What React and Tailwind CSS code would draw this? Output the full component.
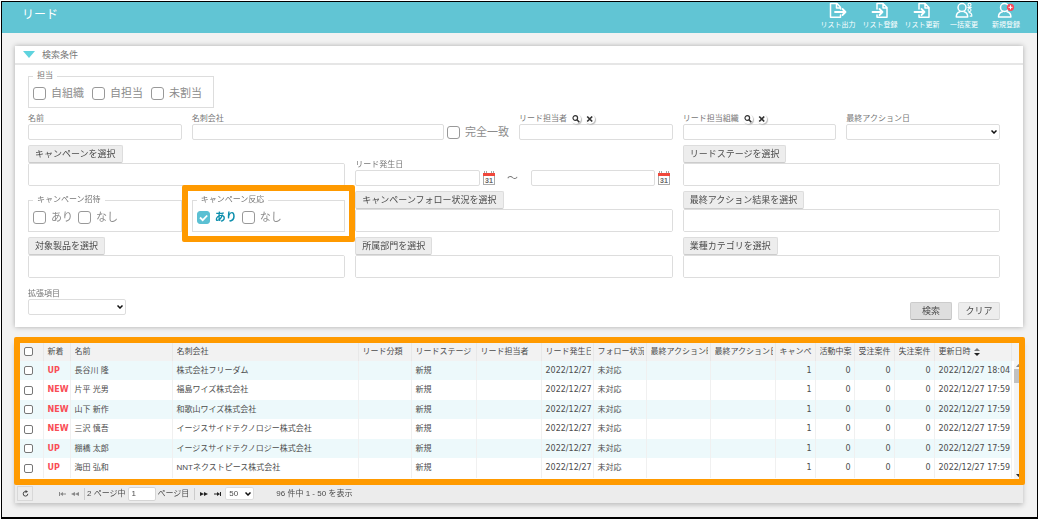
import { useState } from 'react'
import clsx from 'clsx'

const columns = [
  { key: 'name',     label: '名前',             width: 'w-[102px]' },
  { key: 'company',  label: '名刺会社',         width: '' },
  { key: 'category', label: 'リード分類',       width: 'w-[53px]' },
  { key: 'stage',    label: 'リードステージ',   width: 'w-[65px]' },
  { key: 'owner',    label: 'リード担当者',     width: 'w-[65px]' },
  { key: 'date',     label: 'リード発生日',     width: 'w-[52px]' },
  { key: 'follow',   label: 'フォロー状況',     width: 'w-[53px]' },
  { key: 'action',   label: '最終アクション時', width: 'w-[64px]' },
  { key: 'result',   label: '最終アクション日', width: 'w-[65px]' },
  { key: 'campaign', label: 'キャンペ',         width: 'w-[40px]', number: true },
  { key: 'active',   label: '活動中案',         width: 'w-[39px]', number: true },
  { key: 'won',      label: '受注案件',         width: 'w-[40px]', number: true },
  { key: 'lost',     label: '失注案件',         width: 'w-[40px]', number: true },
  { key: 'updated',  label: '更新日時',         width: 'w-[77px]', sorted: true },
]

const base = { stage: '新規', date: '2022/12/27', follow: '未対応', campaign: 1, active: 0, won: 0, lost: 0 }

const leads = [
  { ...base, mark: 'UP',  name: '長谷川 隆', company: '株式会社フリーダム', updated: '2022/12/27 18:04' },
  { ...base, mark: 'NEW', name: '片平 光男', company: '福島ワイズ株式会社', updated: '2022/12/27 17:59' },
  { ...base, mark: 'NEW', name: '山下 新作', company: '和歌山ワイズ株式会社', updated: '2022/12/27 17:59' },
  { ...base, mark: 'NEW', name: '三沢 慎吾', company: 'イージスサイドテクノロジー株式会社', updated: '2022/12/27 17:59' },
  { ...base, mark: 'UP',  name: '棚橋 太郎', company: 'イージスサイドテクノロジー株式会社', updated: '2022/12/27 17:59' },
  { ...base, mark: 'UP',  name: '海田 弘和', company: 'NNTネクストピース株式会社', updated: '2022/12/27 17:59' },
]

// ── Icons ──────────────────────────────────────────────────────────────────
function HeaderIcon({ children }) {
  return (
    <svg width="18" height="17" viewBox="0 0 18 17" fill="none" stroke="white" strokeWidth="1.5" strokeLinejoin="round" strokeLinecap="round" aria-hidden="true">
      {children}
    </svg>
  )
}

function ExportIcon() {
  return (
    <HeaderIcon>
      <path d="M11.5 7V5.200L8 1.500H1.500v13.800h10V13M7.500 1.500V6h4" />
      <path d="M6 10h10.500M13.500 7l3 3-3 3" strokeWidth="1.800" />
    </HeaderIcon>
  )
}

function ImportIcon() {
  return (
    <HeaderIcon>
      <path d="M6 7V1.500h6l4 4v9.800H6V13M12 1.500V6h4" />
      <path d="M1.500 10h10M8.500 7l3 3-3 3" strokeWidth="1.800" />
    </HeaderIcon>
  )
}

function PeopleIcon() {
  return (
    <HeaderIcon>
      <circle cx="7" cy="5.500" r="4" />
      <path d="M5 9.700C2.600 10.300 1.300 12 1.300 15h11.400c0-3-1.300-4.700-3.700-5.300" />
      <g strokeWidth="1.100">
        <circle cx="14.500" cy="2.800" r="1.500" />
        <circle cx="14.500" cy="8" r="1.500" />
        <path d="M12.800 5.400h3.400M14 10.600c1.900 0 2.900 1.200 2.900 3.500h-1.800" />
      </g>
    </HeaderIcon>
  )
}

function PersonAddIcon() {
  return (
    <HeaderIcon>
      <circle cx="7.500" cy="5.500" r="4" />
      <path d="M5.500 9.700C2.900 10.200 1.500 12 1.500 15h12.400c0-3-1.300-4.700-3.900-5.300" />
      <circle cx="13.500" cy="5.300" r="3.600" fill="#f8485a" stroke="none" />
      <path d="M13.500 3.700v3.200M11.900 5.300h3.200" strokeWidth="1" />
    </HeaderIcon>
  )
}

function CalendarIcon() {
  return (
    <svg width="12" height="14" viewBox="0 0 12 14" aria-hidden="true">
      <rect x="0.500" y="2.500" width="11" height="11" fill="white" stroke="#aaa" />
      <path d="M0 2h12v3H0z" fill="#f0483c" />
      <path d="M1 1h3M8 1h3" stroke="#888" strokeWidth="1.500" strokeDasharray="1 1" />
      <text x="6" y="12" textAnchor="middle" fontSize="7" fontWeight="bold" fill="#666">31</text>
    </svg>
  )
}

function PagerIcon({ d, dim }) {
  return (
    <svg width="8" height="6" viewBox="0 0 8 6" fill={dim ? '#888' : '#222'} aria-hidden="true">
      <path d={d} />
    </svg>
  )
}

const toolbar = [
  { label: 'リスト出力', Icon: ExportIcon },
  { label: 'リスト登録', Icon: ImportIcon },
  { label: 'リスト更新', Icon: ImportIcon },
  { label: '一括変更',   Icon: PeopleIcon },
  { label: '新規登録',   Icon: PersonAddIcon },
]

// ── Form parts ─────────────────────────────────────────────────────────────
const boxClass = 'block w-full border border-[#ddd] rounded-[2px] bg-white'

function Select({ className, children, ...props }) {
  return (
    <div className={clsx('relative', className)}>
      <select {...props} className={clsx(boxClass, 'appearance-none h-full pl-[3px] text-[8px] leading-[10px]')}>
        {children}
      </select>
      <svg width="6" height="4" viewBox="0 0 6 4" fill="none" stroke="#111" strokeWidth="1.500" className="absolute right-[3px] inset-y-0 my-auto pointer-events-none" aria-hidden="true">
        <path d="M.5.500L3 3 5.500.500" />
      </svg>
    </div>
  )
}

function Check({ label, defaultChecked = false }) {
  const [checked, setChecked] = useState(defaultChecked)
  return (
    <label className="relative flex items-center gap-[5px] shrink-0 text-[11px] leading-[14px]">
      <input
        type="checkbox"
        checked={checked}
        onChange={(e) => setChecked(e.target.checked)}
        className="appearance-none size-[13px] rounded-[3px] border border-[#999] bg-white checked:bg-[#5bc0d3] checked:border-[#5bc0d3]"
      />
      {checked && (
        <svg className="absolute left-0 inset-y-0 my-auto size-[13px] pointer-events-none" viewBox="0 0 13 13" fill="none" stroke="white" strokeWidth="1.800" aria-hidden="true">
          <path d="M3 6.500l2.700 2.700L10.200 4.500" />
        </svg>
      )}
      <span className={checked ? 'font-bold text-[#0d8fad]' : 'text-[#8c8c8c]'}>{label}</span>
    </label>
  )
}

function CheckGroup({ legend, className, children }) {
  return (
    <fieldset className={clsx('min-w-0 h-[37px] border border-[#ddd] pl-1', className)}>
      <legend className="px-1 text-[8px] leading-[10px]">{legend}</legend>
      <div className="flex items-center h-[24px]">{children}</div>
    </fieldset>
  )
}

function Field({ id, label, lookup, className, children }) {
  return (
    <div className={className}>
      <div className="flex items-center h-[11px] text-[8px] leading-[10px] whitespace-nowrap">
        <label htmlFor={id}>{label}</label>
        {lookup && (
          <span className="flex gap-1 ml-1">
            <button type="button" aria-label={`${label}を検索`} className="size-[10px] rounded-full bg-white shadow-[1px_1px_1px_#bbb]">
              <svg width="10" height="10" viewBox="0 0 10 10" fill="none" stroke="#333" strokeWidth="1.200" aria-hidden="true">
                <circle cx="4.300" cy="4" r="2.300" />
                <path d="M6 5.700l2.300 2.500" strokeWidth="1.600" />
              </svg>
            </button>
            <button type="button" aria-label={`${label}を消去`} className="size-[10px] rounded-full bg-white shadow-[1px_1px_1px_#bbb]">
              <svg width="10" height="10" viewBox="0 0 10 10" fill="none" stroke="#333" strokeWidth="1.700" aria-hidden="true">
                <path d="M2.200 2.500l5 5M7.200 2.500l-5 5" />
              </svg>
            </button>
          </span>
        )}
      </div>
      {children}
    </div>
  )
}

function Picker({ label }) {
  return (
    <div className="col-span-2">
      <button type="button" className="block h-[18px] px-[6px] border border-[#ddd] border-b-[#ccc] rounded-[2px] bg-[#ededed] text-[9px] leading-[14px] text-[#4c4c4c] whitespace-nowrap">
        {label}
      </button>
      <textarea aria-label={label} className={clsx(boxClass, 'h-[23px] resize-none')} />
    </div>
  )
}

function DateInput({ id, label }) {
  return (
    <div className="flex-1 flex items-center gap-[3px] min-w-0">
      <input id={id} type="text" aria-label={label} className={clsx(boxClass, 'h-4 min-w-0')} />
      <button type="button" aria-label="カレンダー" className="shrink-0"><CalendarIcon /></button>
    </div>
  )
}

function SearchPanel() {
  return (
    <section className="bg-white text-[#777] shadow-[0_0_5px_#aaa]">
      <h2 className="flex items-center h-[19px] pl-2 gap-[7px] border-b-2 border-[#e6e6e6] text-[9px] leading-[14px]">
        <svg width="12" height="7" viewBox="0 0 12 7" fill="#5fd3de" aria-hidden="true"><path d="M0 0h12L6 7z" /></svg>
        検索条件
      </h2>
      <form className="pt-[6px] pb-[7px] pl-[13px] pr-[23px]" onSubmit={(e) => e.preventDefault()}>
        <CheckGroup legend="担当" className="w-[186px]">
          <div className="flex gap-2">
            <Check label="自組織" />
            <Check label="自担当" />
            <Check label="未割当" />
          </div>
        </CheckGroup>

        <div className="grid grid-cols-6 gap-x-[10px] gap-y-[5px] mt-[5px]">
          <Field id="name" label="名前">
            <input id="name" type="text" className={clsx(boxClass, 'h-4')} />
          </Field>
          <Field id="company" label="名刺会社" className="col-span-2">
            <div className="flex items-center gap-[3px] h-4">
              <input id="company" type="text" className={clsx(boxClass, 'h-4 min-w-0')} />
              <Check label="完全一致" />
            </div>
          </Field>
          <Field id="owner" label="リード担当者" lookup>
            <input id="owner" type="text" className={clsx(boxClass, 'h-4')} />
          </Field>
          <Field id="team" label="リード担当組織" lookup>
            <input id="team" type="text" className={clsx(boxClass, 'h-4')} />
          </Field>
          <Field id="action" label="最終アクション日">
            <Select id="action" className="h-4" />
          </Field>

          <Picker label="キャンペーンを選択" />
          <Field id="from" label="リード発生日" className="col-span-2 self-end">
            <div className="flex items-center h-4 pr-[3px]">
              <DateInput id="from" label="リード発生日 開始" />
              <span className="w-9 text-center text-[11px] leading-[14px]">～</span>
              <DateInput id="to" label="リード発生日 終了" />
            </div>
          </Field>
          <Picker label="リードステージを選択" />

          <CheckGroup legend="キャンペーン招待" className="self-end">
            <div className="flex gap-[5px]">
              <Check label="あり" />
              <Check label="なし" />
            </div>
          </CheckGroup>
          <div className="relative self-end">
            <CheckGroup legend="キャンペーン反応">
              <div className="flex gap-[5px]">
                <Check label="あり" defaultChecked />
                <Check label="なし" />
              </div>
            </CheckGroup>
            <div className="absolute -inset-[10px] z-10 border-6 border-[#ff9a00] rounded-[2px] pointer-events-none" />
          </div>
          <Picker label="キャンペーンフォロー状況を選択" />
          <Picker label="最終アクション結果を選択" />

          <Picker label="対象製品を選択" />
          <Picker label="所属部門を選択" />
          <Picker label="業種カテゴリを選択" />
        </div>

        <div className="flex justify-between mt-[10px]">
          <Field id="extra" label="拡張項目" className="w-[98px]">
            <Select id="extra" className="h-4" />
          </Field>
          <div className="flex gap-[6px] pt-[14px] text-[9px] leading-[14px] text-[#4c4c4c]">
            <button type="submit" className="w-[42px] h-[18px] border border-[#ccc] border-b-[#aaa] rounded-[2px] bg-[#dedede]">検索</button>
            <button type="reset" className="w-[42px] h-[18px] border border-[#ddd] border-b-[#ccc] rounded-[2px] bg-[#ededed]">クリア</button>
          </div>
        </div>
      </form>
    </section>
  )
}

// ── Result list ────────────────────────────────────────────────────────────
function RowCheck({ label }) {
  return (
    <input type="checkbox" aria-label={label} className="block appearance-none size-[9px] ml-[9px] rounded-[2px] border border-[#777] bg-white checked:bg-[#5bc0d3]" />
  )
}

function LeadTable() {
  return (
    <div className="relative bg-white pb-[2px]">
      <table className="w-full table-fixed border-collapse text-left text-[8px] leading-[12px] text-[#4c4c4c] whitespace-nowrap">
        <thead>
          <tr className="h-[19px] bg-[#f2f2f2]">
            <th className="w-[28px] p-0 border-r border-[#e8e8e8]"><RowCheck label="すべて選択" /></th>
            <th className="w-[27px] p-0 pl-1 border-r border-[#e8e8e8] font-normal">新着</th>
            {columns.map(c => (
              <th key={c.key} className={clsx('p-0 pl-1 pr-[2px] border-r border-[#e8e8e8] font-normal', c.width)}>
                <div className="flex items-center gap-[3px] overflow-hidden">
                  {c.label}
                  {c.sorted && (
                    <svg width="6" height="8" viewBox="0 0 6 8" className="shrink-0" aria-hidden="true">
                      <path d="M0 3l3-3 3 3z" fill="#777" />
                      <path d="M0 5l3 3 3-3z" fill="#222" />
                    </svg>
                  )}
                </div>
              </th>
            ))}
            <td className="w-3 p-0" />
          </tr>
        </thead>
        <tbody>
          {leads.map((lead, i) => (
            <tr key={i} className="group odd:h-[19px] even:h-[20px]">
              <td className="p-0 border-r border-[#f0f0f0] group-odd:bg-[#edf9fb]"><RowCheck label={lead.name} /></td>
              <td className="p-0 pl-1 border-r border-[#f0f0f0] group-odd:bg-[#edf9fb] font-[DejaVu_Sans] font-bold text-[#f94d55]">{lead.mark}</td>
              {columns.map(c => (
                <td
                  key={c.key}
                  className={clsx(
                    'p-0 pl-1 overflow-hidden border-r border-[#f0f0f0] group-odd:bg-[#edf9fb]',
                    c.number && 'pr-[3px] text-right',
                    (c.number || c.key === 'date' || c.key === 'updated') && 'font-[DejaVu_Sans]'
                  )}
                >
                  {lead[c.key]}
                </td>
              ))}
              <td className="p-0" />
            </tr>
          ))}
        </tbody>
      </table>

      {/* scrollbar */}
      <div className="absolute right-0 top-[19px] bottom-0 w-[9px] bg-[#f4f4f4] flex flex-col items-center">
        <svg width="9" height="8" viewBox="0 0 9 8" aria-hidden="true"><path d="M2 6l2.500-3L7 6z" fill="#888" /></svg>
        <div className="w-full h-[14px] bg-[#c1c1c1]" />
        <svg width="9" height="8" viewBox="0 0 9 8" className="mt-auto" aria-hidden="true"><path d="M2 2l2.500 3L7 2z" fill="#333" /></svg>
      </div>

      <div className="absolute -left-px -right-[2px] -inset-y-[5px] border-6 border-[#ff9a00] rounded-[2px] pointer-events-none" />
    </div>
  )
}

function Pager() {
  return (
    <div className="flex items-center h-[23px] pt-1 pl-[2px] bg-[#ececec] text-[8px] leading-[12px] text-[#4c4c4c]">
      <button type="button" aria-label="再読み込み" className="flex items-center justify-center w-4 h-[15px] border border-[#d8d8d8]">
        <svg width="7" height="7" viewBox="0 0 7 7" fill="none" stroke="#444" aria-hidden="true">
          <path d="M4 1.500H3.500a2.300 2.300 0 1 0 2.300 2.300" />
          <path d="M3.500 0v3.200L6 1.500z" fill="#444" stroke="none" />
        </svg>
      </button>
      <button type="button" aria-label="最初のページ" className="ml-[26px]"><PagerIcon dim d="M0 1h1v4H0zM4 1v4L1 3zM7 2.500v1H4v-1z" /></button>
      <button type="button" aria-label="前のページ" className="ml-1"><PagerIcon dim d="M4 1v4L0 3zM8 1v4L4 3z" /></button>
      <span className="w-px h-3 ml-[5px] mr-[2px] bg-[#ccc]" />
      <label htmlFor="page">2 ページ中</label>
      <input id="page" type="text" defaultValue="1" className="w-7 h-[14px] mx-[2px] pl-[3px] border border-[#d5d5d5] rounded-[2px] bg-white" />
      <span>ページ目</span>
      <span className="w-px h-3 mx-[5px] bg-[#ccc]" />
      <button type="button" aria-label="次のページ"><PagerIcon d="M0 1v4l4-2zM4 1v4l4-2z" /></button>
      <button type="button" aria-label="最後のページ" className="ml-[6px]"><PagerIcon d="M0 2.500h3v1H0zM3 1v4l3-2zM6 1h1v4H6z" /></button>
      <Select aria-label="表示件数" className="w-[29px] h-[13px] ml-[3px]">
        <option>50</option>
      </Select>
      <span className="ml-[22px]">96 件中 1 - 50 を表示</span>
    </div>
  )
}

export default function App() {
  return (
    <div className="min-h-screen flex flex-col pt-px pl-px bg-white font-['Liberation_Sans','Noto_Sans_CJK_JP',sans-serif]">
      <div className="flex-1 border border-b-2 border-black bg-[#f2f2f2]">
        <header className="flex items-start justify-between h-[31px] pl-5 pr-[10px] bg-[#61c5d4] text-white">
          <h1 className="pt-[5px] text-[12px] leading-[16px]">リード</h1>
          <nav className="flex">
            {toolbar.map(({ label, Icon }) => (
              <button key={label} type="button" className="flex flex-col items-center w-[42px] text-[7px] leading-[12px] whitespace-nowrap">
                <Icon />
                {label}
              </button>
            ))}
          </nav>
        </header>

        <main className="pt-[13px] pl-[13px] pr-[14px]">
          <SearchPanel />
          <section className="mt-[15px] shadow-[0_2px_5px_#bbb]">
            <LeadTable />
            <Pager />
          </section>
        </main>
      </div>
    </div>
  )
}
